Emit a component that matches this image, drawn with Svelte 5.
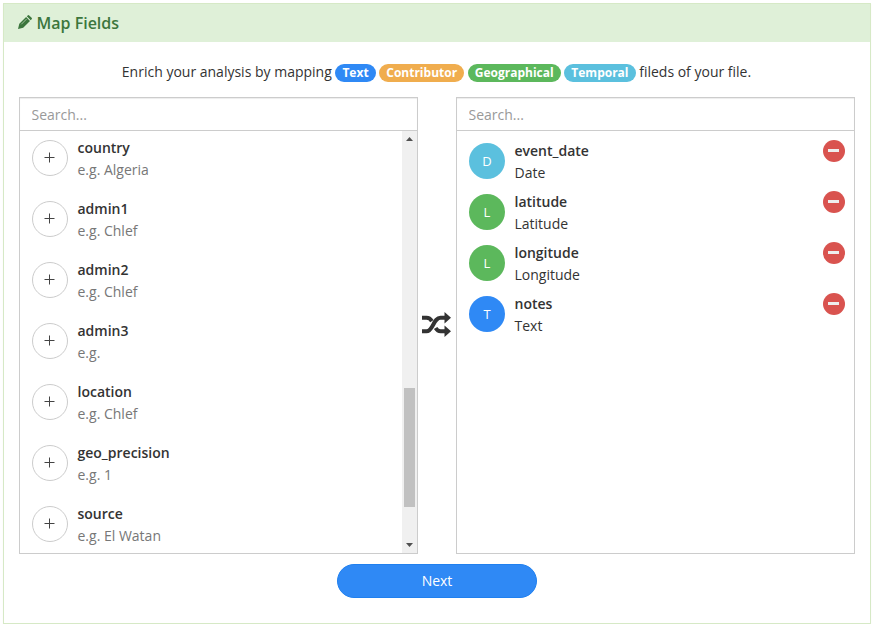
<script>
  const tags = [
    ['Text', 'blue'],
    ['Contributor', 'orange'],
    ['Geographical', 'green'],
    ['Temporal', 'cyan'],
  ];
  const fields = [
    ['country', 'Algeria'],
    ['admin1', 'Chlef'],
    ['admin2', 'Chlef'],
    ['admin3', ''],
    ['location', 'Chlef'],
    ['geo_precision', '1'],
    ['source', 'El Watan'],
  ];
  const mapped = [
    ['event_date', 'Date', 'cyan'],
    ['latitude', 'Latitude', 'green'],
    ['longitude', 'Longitude', 'green'],
    ['notes', 'Text', 'blue'],
  ];
</script>

<div class="panel">
  <header>
    <svg class="pencil" width="15" height="14" viewBox="0 0 15 14">
      <path fill="currentColor" d="M0 14 1.3 8.8 8.1 2 12 5.9 5.2 12.7ZM8.8 1.3 9.7.4Q10.4-.2 11.2.4L13.6 2.8Q14.3 3.5 13.6 4.3L12.7 5.2Z" />
      <path stroke="#dff0d8" stroke-width=".6" d="m3.3 9.3 5.3-5.3" />
    </svg>
    <h3>Map Fields</h3>
  </header>
  <main>
    <p class="intro">
      Enrich your analysis by mapping
      {#each tags as [name, color]}<span class="tag {color}">{name}</span>{' '}{/each}fileds of your file.
    </p>
    <div class="columns">
      <section class="box">
        <input placeholder="Search..." />
        <div class="body">
          <ul class="source">
            {#each fields as [name, sample]}
              <li>
                <button class="circle add" aria-label="Add {name}">
                  <svg width="12" height="12" viewBox="0 0 12 12"><path stroke="#444" d="M.5 5.5h10M5.5.5v10" /></svg>
                </button>
                <div class="label"><b>{name}</b><span>e.g. {sample}</span></div>
              </li>
            {/each}
          </ul>
          <div class="scroll">
            <svg width="7" height="4" viewBox="0 0 7 4"><path fill="#505050" d="M0 4h7L3.5 0z" /></svg>
            <div class="thumb"></div>
            <svg width="7" height="4" viewBox="0 0 7 4"><path fill="#505050" d="M0 0h7L3.5 4z" /></svg>
          </div>
        </div>
      </section>
      <div class="swap">
        <svg width="29" height="25" viewBox="0 0 29 25">
          <g fill="none" stroke="#333" stroke-width="4">
            <path d="M0 19.3h4.5c6.5 0 7-13.6 14-13.6h5" />
            <path d="M0 5.7h4.5c2.6 0 4.2 1.4 5.4 3.4M13.6 16c1.2 2 2.6 3.3 5 3.3h5" />
          </g>
          <path fill="#333" d="m22.5 0 6.5 5.7-6.5 5.8zM22.5 13.5l6.5 5.8-6.5 5.7z" />
        </svg>
      </div>
      <section class="box">
        <input placeholder="Search..." />
        <div class="body">
          <ul class="target">
            {#each mapped as [name, type, color]}
              <li>
                <div class="circle {color}">{type[0]}</div>
                <div class="label"><b>{name}</b><span>{type}</span></div>
                <button class="remove" aria-label="Remove {name}"><i></i></button>
              </li>
            {/each}
          </ul>
        </div>
      </section>
    </div>
    <button class="next">Next</button>
  </main>
</div>

<style>
  :global(body) { background: #fff; }
  .panel {
    box-sizing: border-box;
    width: 868px;
    height: 621px;
    margin: 3px 0 0 3px;
    border: 1px solid #d6e9c6;
    box-shadow: 0 1px 1px rgba(0, 0, 0, .05);
    font: 14px/22px "Open Sans", sans-serif;
    color: #333;
  }
  header {
    display: flex;
    align-items: center;
    height: 38px;
    padding-left: 14px;
    gap: 3.5px;
    background: #dff0d8;
    color: #3c763d;
  }
  .pencil { margin-top: -2px; }
  h3 { margin: 0; font-size: 16px; font-weight: 600; line-height: 22px; }
  main { padding: 19px 15px 0; }
  .intro { margin: 0 1px 14px 0; text-align: center; white-space: nowrap; }
  .tag {
    display: inline-block;
    padding: 3px 7px;
    border-radius: 10px;
    color: #fff;
    font-size: 12px;
    font-weight: 700;
    line-height: 12px;
    vertical-align: middle;
  }
  .blue { background: #2f89f5; }
  .orange { background: #f0ad4e; }
  .green { background: #5cb85c; }
  .cyan { background: #5bc0de; }
  .columns { display: flex; height: 457px; }
  .box {
    box-sizing: border-box;
    display: flex;
    flex-direction: column;
    width: 399px;
    border: 1px solid #ccc;
  }
  input {
    box-sizing: border-box;
    height: 33px;
    padding: 0 11.5px;
    border: 0;
    border-bottom: 1px solid #ccc;
    box-shadow: inset 0 1px 1px rgba(0, 0, 0, .075);
    font: inherit;
    outline: 0;
  }
  input::placeholder { color: #999; opacity: 1; }
  .body { display: flex; flex: 1; min-height: 0; }
  ul { flex: 1; margin: 0; padding: 0 9px 0 12px; list-style: none; }
  li { display: flex; align-items: flex-start; }
  .source { padding-top: 6px; }
  .source li { height: 61px; }
  .source .circle { margin-top: 3px; }
  .target { padding-top: 9px; }
  .target li { height: 51px; }
  .target .circle { margin-top: 3px; }
  .circle {
    box-sizing: border-box;
    display: flex;
    align-items: center;
    justify-content: center;
    width: 36px;
    height: 36px;
    border-radius: 50%;
    color: #fff;
    font-size: 13px;
  }
  .add { padding: 0 1px 0 0; border: 1px solid #ccc; background: #fff; }
  .label { display: flex; flex: 1; flex-direction: column; margin-left: 9.5px; }
  .label b { font-weight: 600; }
  .source .label span { color: #777; }
  .remove {
    display: flex;
    align-items: center;
    justify-content: center;
    width: 22px;
    height: 22px;
    padding: 0;
    border: 0;
    border-radius: 50%;
    background: #d9534f;
  }
  .remove i { width: 11px; height: 3px; margin: 0 1px 1px 0; background: #eee; }
  .scroll {
    box-sizing: border-box;
    display: flex;
    flex-direction: column;
    align-items: center;
    width: 15px;
    padding: 6px 0;
    background: #f0f0f0;
  }
  .scroll svg { display: block; }
  .thumb { width: 11px; height: 119px; margin: auto 0 36px; background: #c1c1c1; }
  .swap { width: 38px; padding: 215px 0 0 4px; box-sizing: border-box; }
  .swap svg { display: block; }
  .next {
    display: block;
    box-sizing: border-box;
    width: 200px;
    height: 34px;
    margin: 10px auto 0;
    padding: 0;
    border: 1px solid #2080ef;
    border-radius: 17px;
    background: #2f89f5;
    color: #fff;
    font: inherit;
  }
</style>
